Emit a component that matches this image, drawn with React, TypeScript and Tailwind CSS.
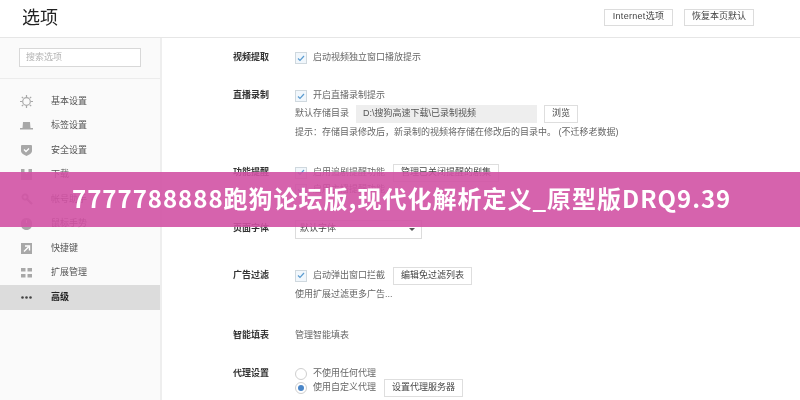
import type { ReactNode } from 'react';

const FONT = '"Liberation Sans", "Noto Sans CJK SC", sans-serif';

function GearIcon() {
  return (
    <svg width="13" height="13" viewBox="0 0 13 13" fill="none" stroke="#a8a8a8" strokeWidth="1.2" className="shrink-0">
      <circle cx="6.5" cy="6.5" r="3.8" />
      <path d="M6.5 0v2M6.500 11v2M0 6.500h2M11 6.500h2M1.800 1.800l1.400 1.400M9.800 9.800l1.400 1.400M1.800 11.200l1.400-1.400M9.800 3.200l1.400-1.400" />
    </svg>
  );
}

function TabIcon() {
  return (
    <svg width="13" height="13" viewBox="0 0 13 13" fill="#a8a8a8" className="shrink-0">
      <path d="M3 3h7l.5 6h-8zM0 9h13v1.500H0z" />
    </svg>
  );
}

function ShieldIcon() {
  return (
    <svg width="11" height="11" viewBox="0 0 11 11" className="shrink-0">
      <path d="M1 0h9a1 1 0 0 1 1 1v5c0 2-3 4-5.500 5C3 10 0 8 0 6V1a1 1 0 0 1 1-1z" fill="#a8a8a8" />
      <path d="M3 4.500l2 2 3-3" fill="none" stroke="#fff" strokeWidth="1.300" />
    </svg>
  );
}

function DownloadIcon() {
  return (
    <svg width="11" height="11" viewBox="0 0 11 11" className="shrink-0">
      <path d="M0 0h3.500v3l2 2 2-2V0H11v11H0z" fill="#a8a8a8" />
    </svg>
  );
}

function KeyIcon() {
  return (
    <svg width="12" height="12" viewBox="0 0 12 12" fill="none" stroke="#a8a8a8" className="shrink-0">
      <circle cx="4" cy="4" r="2.600" strokeWidth="1.800" />
      <path d="M6 6l5 5" strokeWidth="2.200" />
    </svg>
  );
}

function GestureIcon() {
  return (
    <svg width="11" height="12" viewBox="0 0 11 12" className="shrink-0">
      <path d="M0 5a5.500 5 0 0 1 11 0v2c0 3-3 5-5.500 5S0 10 0 7z" fill="#a8a8a8" />
      <path d="M5.500 2v3" stroke="#fff" />
    </svg>
  );
}

function ShortcutIcon() {
  return (
    <svg width="11" height="11" viewBox="0 0 11 11" className="shrink-0">
      <path d="M0 0h11v11H0z" fill="#a8a8a8" />
      <path d="M3 8.500L7.500 4M4 3h4.500v4.500" fill="none" stroke="#fff" strokeWidth="1.400" />
    </svg>
  );
}

function GridIcon() {
  return (
    <svg width="11" height="10" viewBox="0 0 11 10" fill="#a8a8a8" className="shrink-0">
      <path d="M0 0h4.500v3.500H0zM6.500 0H11v3.500H6.500zM0 6h4.500v3.500H0zM6.500 6H11v3.500H6.500z" />
    </svg>
  );
}

function DotsIcon() {
  return (
    <svg width="11" height="3" viewBox="0 0 11 3" fill="#444" className="shrink-0">
      <circle cx="1.500" cy="1.500" r="1.300" />
      <circle cx="5.500" cy="1.500" r="1.300" />
      <circle cx="9.500" cy="1.500" r="1.300" />
    </svg>
  );
}

const menu = [
  { label: '基本设置', icon: <GearIcon /> },
  { label: '标签设置', icon: <TabIcon /> },
  { label: '安全设置', icon: <ShieldIcon /> },
  { label: '下载', icon: <DownloadIcon /> },
  { label: '帐号助手', icon: <KeyIcon /> },
  { label: '鼠标手势', icon: <GestureIcon /> },
  { label: '快捷键', icon: <ShortcutIcon /> },
  { label: '扩展管理', icon: <GridIcon /> },
  { label: '高级', icon: <DotsIcon />, active: true },
];

function Checkbox() {
  return (
    <span className="w-3 h-3 shrink-0 flex items-center justify-center bg-[#f1f7fc] border border-[#cfd8de]">
      <svg width="8" height="7" viewBox="0 0 8 7" fill="none" stroke="#5a9bd0" strokeWidth="1.200">
        <path d="M1 3.500l2 2 4-4.500" />
      </svg>
    </span>
  );
}

function Radio({ on }: { on?: boolean }) {
  return (
    <span className="w-3 h-3 shrink-0 rounded-full flex items-center justify-center bg-white border border-[#cfcfcf]">
      {on && <span className="w-1.5 h-1.5 rounded-full bg-[#4a86c8]" />}
    </span>
  );
}

function Btn({ children }: { children: ReactNode }) {
  return (
    <span className="h-[18px] px-[7px] flex items-center bg-white border border-[#dedede] text-[9px] text-[#444] whitespace-nowrap">
      {children}
    </span>
  );
}

function Check({ children }: { children: ReactNode }) {
  return (
    <div className="flex items-center gap-[6px] h-[14px]">
      <Checkbox />
      <span className="whitespace-nowrap">{children}</span>
    </div>
  );
}

function Row({ label, className, children }: { label: string; className: string; children: ReactNode }) {
  return (
    <div className={`flex ${className}`}>
      <div className="w-[62px] shrink-0 h-[14px] flex items-center text-[9px] font-bold text-[#333]">{label}</div>
      <div className="flex-1 flex flex-col">{children}</div>
    </div>
  );
}

export default function App() {
  return (
    <div className="relative w-[800px] h-[400px] overflow-hidden bg-white flex flex-col blur-[0.3px]" style={{ fontFamily: FONT }}>
      <header className="h-[38px] shrink-0 flex items-center justify-between border-b border-[#e6e6e6] pl-[22px] pr-[46px]">
        <h1 className="text-[18px] text-[#222] font-normal">选项</h1>
        <div className="flex gap-[11px] mb-[3px]">
          <span className="h-[17px] w-[69px] flex items-center justify-center border border-[#dcdcdc] text-[9px] text-[#444] tracking-[0.3px]">Internet选项</span>
          <span className="h-[17px] w-[70px] flex items-center justify-center border border-[#dcdcdc] text-[9px] text-[#444]">恢复本页默认</span>
        </div>
      </header>

      <div className="flex flex-1 min-h-0">
        <aside className="w-[162px] shrink-0 bg-[#fafafa] border-r-2 border-[#eeeeee]">
          <div className="h-[41px] pl-[19px] pt-[10px] border-b border-[#ececec]">
            <div className="w-[122px] h-[19px] pl-[6px] flex items-center bg-white border border-[#d8d8d8] text-[9px] text-[#b4b4b4]">搜索选项</div>
          </div>
          <nav className="pt-[10px]">
            {menu.map((m) => (
              <div
                key={m.label}
                className={`h-[24.5px] flex items-center text-[9px] ${m.active ? 'bg-[#dcdcdc] font-bold text-[#222]' : 'text-[#555]'}`}
              >
                <span className="w-[13px] ml-[20px] mr-[18px] shrink-0 flex items-center justify-center">{m.icon}</span>
                <span>{m.label}</span>
              </div>
            ))}
          </nav>
        </aside>

        <main className="flex-1 pl-[71px] pt-[13px] text-[9px] text-[#666]">
          <Row label="视频提取" className="mb-[24px]">
            <Check>启动视频独立窗口播放提示</Check>
          </Row>

          <Row label="直播录制" className="mb-[26px]">
            <Check>开启直播录制提示</Check>
            <div className="flex items-center mt-[2px] h-[18px]">
              <span className="w-[61px]">默认存储目录</span>
              <span className="w-[181px] h-[18px] pl-[7px] flex items-center bg-[#eeeeee] text-[#555]">D:\搜狗高速下载\已录制视频</span>
              <span className="ml-[7px]"><Btn>浏览</Btn></span>
            </div>
            <div className="mt-[3px] whitespace-nowrap">提示：存储目录修改后，新录制的视频将存储在修改后的目录中。  (不迁移老数据)</div>
          </Row>

          <Row label="功能提醒" className="mb-[25px]">
            <div className="flex items-center gap-2 -mt-[2px]">
              <Check>启用追剧提醒功能</Check>
              <Btn>管理已关闭提醒的剧集</Btn>
            </div>
            <div className="mt-[1px]">
              <Check>启用主播提醒功能</Check>
            </div>
          </Row>

          <Row label="页面字体" className="mb-[30px]">
            <div className="w-[127px] h-[19px] -mt-[2px] pl-[4px] pr-[6px] flex items-center justify-between bg-white border border-[#dcdcdc] text-[#444]">
              默认字体
              <span className="w-0 h-0 border-x-[3px] border-x-transparent border-t-[3px] border-t-[#555]" />
            </div>
          </Row>

          <Row label="广告过滤" className="mb-[28px]">
            <div className="flex items-center gap-2 -mt-[2px]">
              <Check>启动弹出窗口拦截</Check>
              <Btn>编辑免过滤列表</Btn>
            </div>
            <div className="mt-[3px]">使用扩展过滤更多广告...</div>
          </Row>

          <Row label="智能填表" className="mb-[24px]">
            <div className="h-[14px] flex items-center">管理智能填表</div>
          </Row>

          <Row label="代理设置" className="">
            <div className="flex items-center gap-[6px] h-[14px]">
              <Radio />
              不使用任何代理
            </div>
            <div className="flex items-center gap-[6px] h-[14px]">
              <Radio on />
              使用自定义代理
              <span className="ml-[2px]"><Btn>设置代理服务器</Btn></span>
            </div>
          </Row>
        </main>
      </div>

      <div className="absolute left-0 right-0 top-[172px] h-[55px] bg-[#d252a4]/90 flex items-center pl-[72px] pb-[4px]">
        <span
          className="text-[24px] font-bold text-white whitespace-nowrap tracking-[1px]"
          style={{ fontFamily: '"Noto Sans CJK SC", sans-serif' }}
        >
          7777788888跑狗论坛版,现代化解析定义_原型版DRQ9.39
        </span>
      </div>
    </div>
  );
}
